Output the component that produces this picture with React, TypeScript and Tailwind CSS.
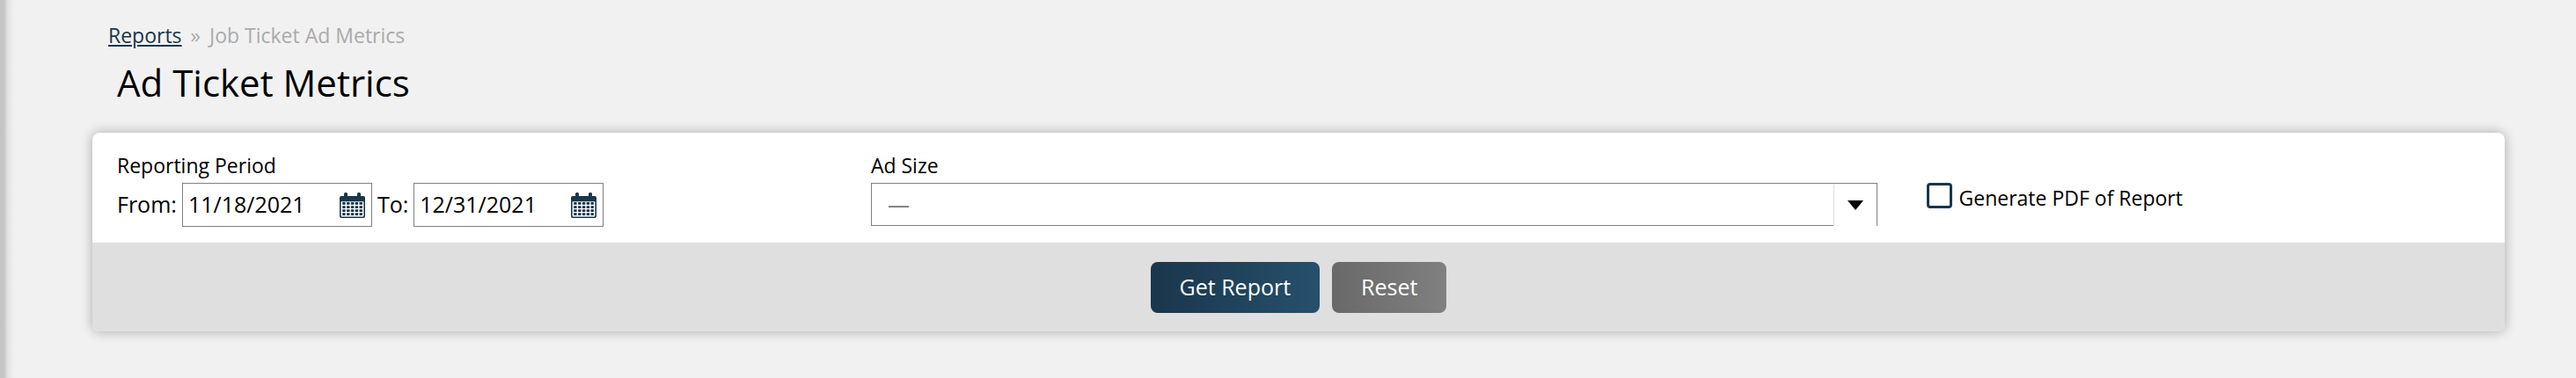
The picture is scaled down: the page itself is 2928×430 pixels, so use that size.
import { useState } from 'react'

const CalendarIcon = () => (
  <svg width="29" height="29" viewBox="0 0 29 29" aria-hidden="true">
    <rect x="5" y="0" width="4" height="8" rx="1.5" fill="#1a364b" />
    <rect x="20" y="0" width="4" height="8" rx="1.5" fill="#1a364b" />
    <path
      fillRule="evenodd"
      fill="#1a364b"
      d="M2 4H27A2 2 0 0 1 29 6V27A2 2 0 0 1 27 29H2A2 2 0 0 1 0 27V6A2 2 0 0 1 2 4ZM1.6 10.3V26.6A0.9 0.9 0 0 0 2.5 27.5H26.5A0.9 0.9 0 0 0 27.4 26.6V10.3Z"
    />
    {[11, 15.2, 19.2, 23.2].map((y) =>
      [3.2, 8.1, 12.9, 17.7, 22.5].map((x) => (
        <rect key={`${x}-${y}`} x={x} y={y} width="3.4" height="2.8" fill="#1a364b" />
      ))
    )}
  </svg>
)

type DateFieldProps = {
  id: string
  label: string
  value: string
  onChange: (value: string) => void
}

const DateField = ({ id, label, value, onChange }: DateFieldProps) => (
  <div className="flex items-center gap-1.5">
    <label htmlFor={id}>{label}</label>
    <div className="flex h-[50px] w-[216px] items-center border border-[#808080] bg-white pl-1.5 pr-[7px]">
      <input
        id={id}
        type="text"
        className="w-full min-w-0 bg-transparent outline-none"
        value={value}
        onChange={(e) => onChange(e.target.value)}
      />
      <button type="button" className="shrink-0" aria-label="Open calendar">
        <CalendarIcon />
      </button>
    </div>
  </div>
)

const App = () => {
  const [from, setFrom] = useState('11/18/2021')
  const [to, setTo] = useState('12/31/2021')
  const [adSize, setAdSize] = useState('')
  const [generatePdf, setGeneratePdf] = useState(false)

  const handleReset = () => {
    setFrom('11/18/2021')
    setTo('12/31/2021')
    setAdSize('')
    setGeneratePdf(false)
  }

  return (
    <div className="flex min-h-screen bg-[#f1f1f1] font-['Open_Sans','Noto_Sans',sans-serif] text-[23px] text-black">
      <div className="w-4 shrink-0 bg-linear-to-r from-[#c4c4c4] from-25% via-[#e2e2e2] via-55% to-[#f1f1f1]" />
      <main className="min-w-0 flex-1 pb-12 pl-[89px] pr-[81px] pt-6">
        <nav className="flex gap-2.5 pl-[18px] leading-8 text-[#aaaaaa]" aria-label="Breadcrumb">
          <a href="#" className="text-[#1a364b] underline">Reports</a>
          <span>»</span>
          <span>Job Ticket Ad Metrics</span>
        </nav>
        <h1 className="mt-2 pl-7 text-[42px] leading-[60px]">Ad Ticket Metrics</h1>

        <form
          className="mt-[27px] overflow-hidden rounded-lg bg-white shadow-[0_0_14px_rgba(0,0,0,0.3)]"
          onSubmit={(e) => e.preventDefault()}
        >
          <div className="grid grid-cols-[5fr_7fr_4fr] pb-[18px] pt-5">
            <fieldset className="px-7">
              <legend className="leading-[34px]">Reporting Period</legend>
              <div className="mt-[3px] flex gap-1.5 text-[25px]">
                <DateField id="from" label="From:" value={from} onChange={setFrom} />
                <DateField id="to" label="To:" value={to} onChange={setTo} />
              </div>
            </fieldset>

            <div className="px-7">
              <label htmlFor="adSize" className="block leading-[34px]">Ad Size</label>
              <div className="relative mt-[3px]">
                <select
                  id="adSize"
                  className="block h-[49px] w-full appearance-none border border-[#808080] bg-white pl-[18px] text-[25px] text-[#777777] outline-none"
                  value={adSize}
                  onChange={(e) => setAdSize(e.target.value)}
                >
                  <option value="">—</option>
                </select>
                <div className="pointer-events-none absolute bottom-0 right-px top-0.5 flex w-[49px] items-center justify-center border-l border-[#dddddd] bg-white">
                  <svg width="18" height="11" viewBox="0 0 18 11" aria-hidden="true">
                    <path d="M0 0H18L9 11Z" fill="#000000" />
                  </svg>
                </div>
              </div>
            </div>

            <div className="flex items-start gap-2 px-7 pt-[37px]">
              <input
                id="generatePdf"
                type="checkbox"
                className="size-[29px] shrink-0 appearance-none rounded border-3 border-[#1a364b] bg-white checked:bg-[#1a364b]"
                checked={generatePdf}
                onChange={(e) => setGeneratePdf(e.target.checked)}
              />
              <label htmlFor="generatePdf" className="leading-[34px]">Generate PDF of Report</label>
            </div>
          </div>

          <div className="flex justify-center gap-3.5 bg-[#dfdfdf] pb-[21px] pt-[22px] text-[25px] text-white">
            <button type="submit" className="h-[58px] rounded-lg bg-linear-to-r from-[#1a364b] to-[#26506d] px-[33px]">
              Get Report
            </button>
            <button
              type="button"
              className="h-[58px] rounded-lg bg-linear-to-r from-[#696969] to-[#808080] px-[33px]"
              onClick={handleReset}
            >
              Reset
            </button>
          </div>
        </form>
      </main>
    </div>
  )
}

export default App
